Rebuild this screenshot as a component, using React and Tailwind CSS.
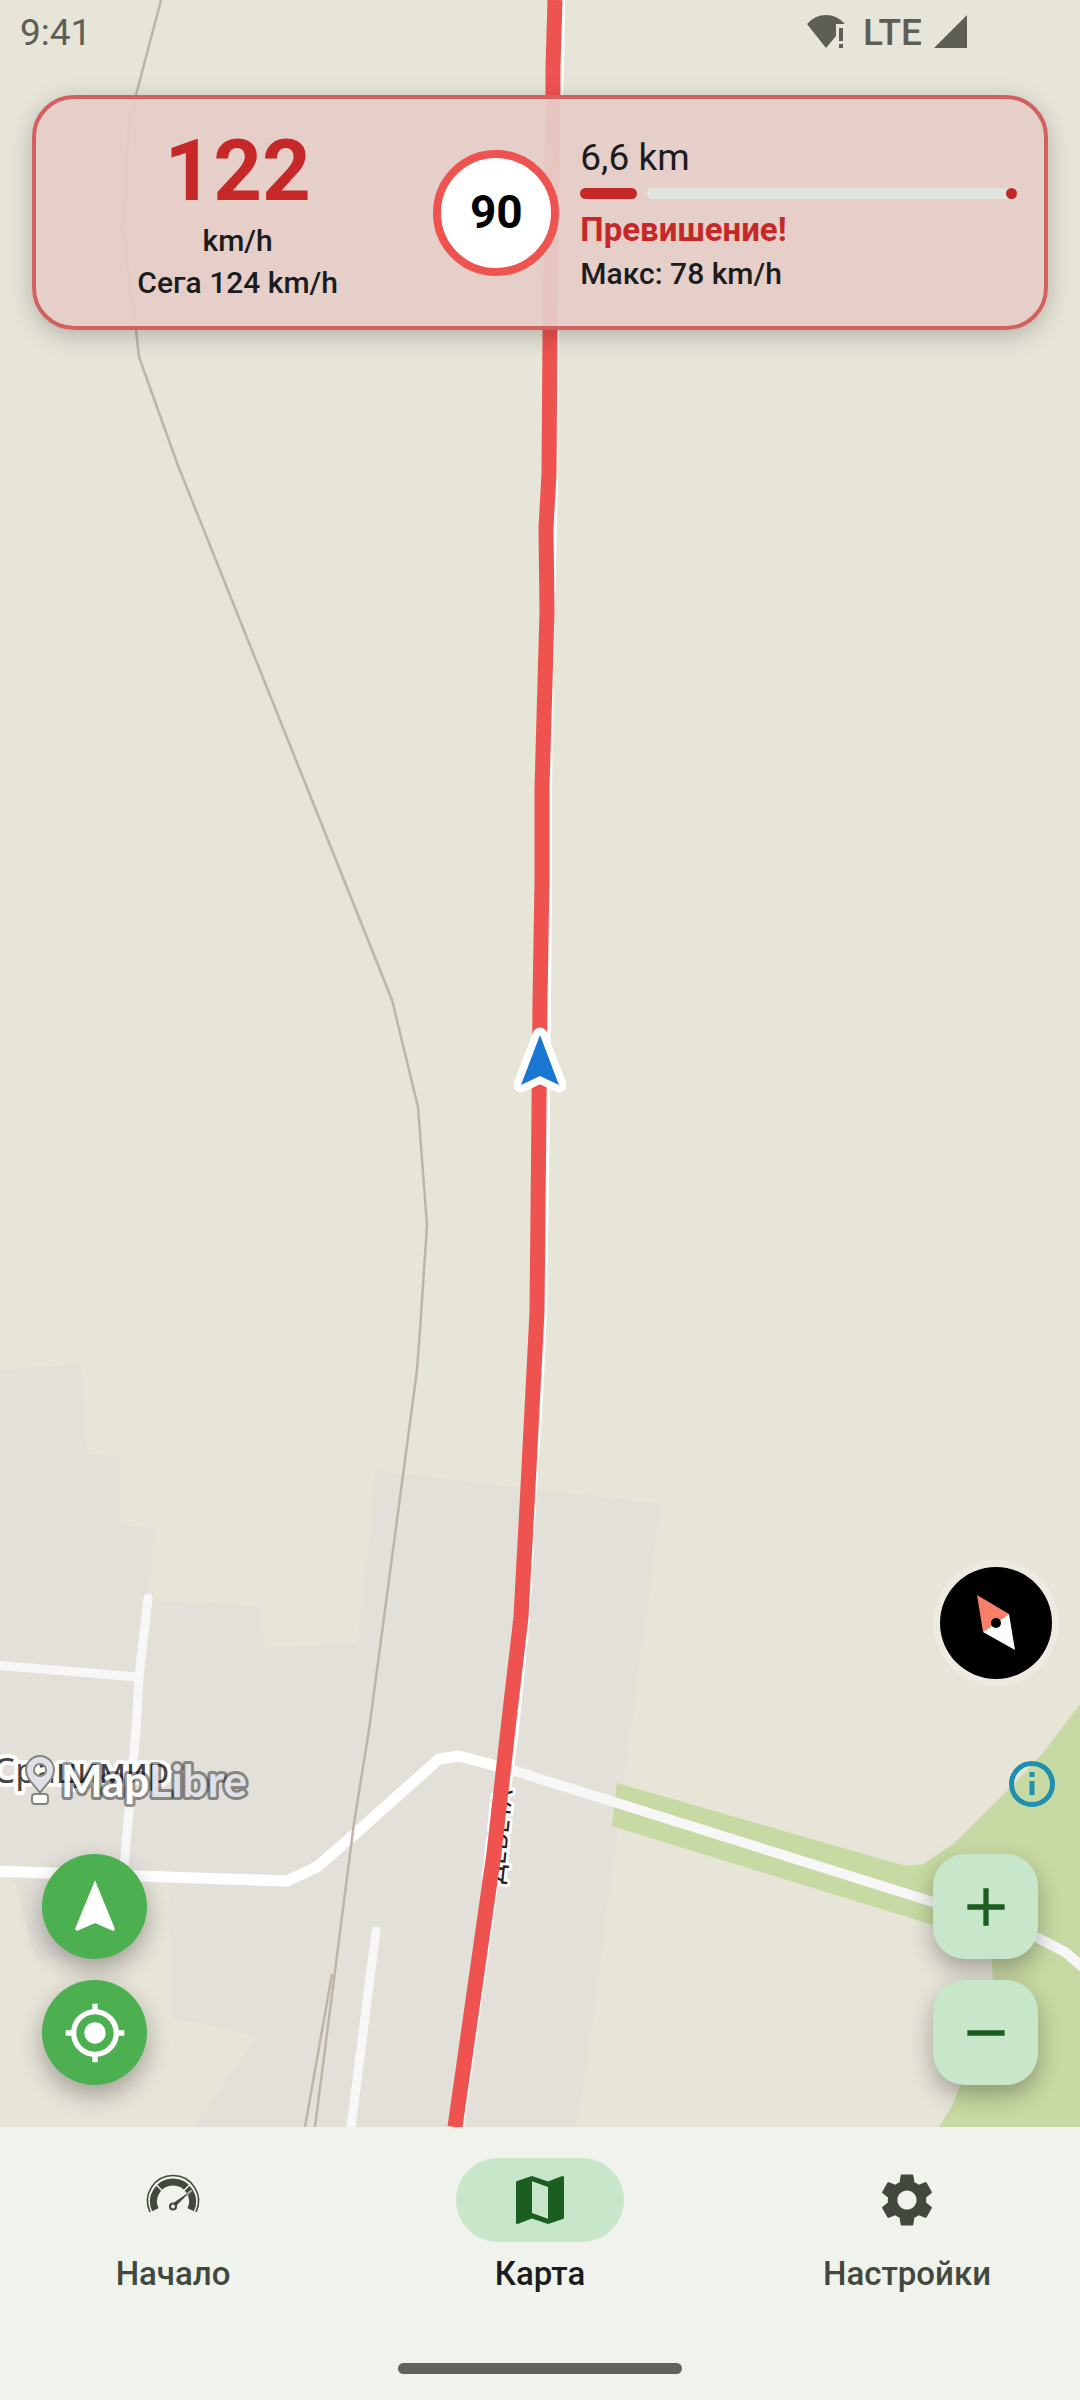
import { useState } from 'react'
import { MdAdd, MdMap, MdMyLocation, MdNavigation, MdRemove, MdSettings } from 'react-icons/md'

const ROUTE =
  'M555 0 L553 68 L553 95 L550 330 L549 474 L546 528 L547 612 L542 788 L542 880 L540 1002 L539 1110 L537 1312 L528 1487 L521 1617 L509 1720 L494 1853 L455 2127'

function MapCanvas() {
  return (
    <svg
      viewBox="0 0 1080 2127"
      preserveAspectRatio="xMidYMax slice"
      className="absolute inset-0 h-full w-full"
      aria-hidden="true"
    >
      <rect width="1080" height="2127" fill="#e7e4d8" />

      {/* built-up areas */}
      <path
        fill="#e2e0d8"
        d="M0 1370 L80 1364 L88 1454 L121 1457 V1525 L155 1529 L148 1600 L260 1606 L264 1648 L358 1643 L376 1471 L661 1504 L632 1720 L583 2093 L575 2127 H194 L256 2036 L170 2017 L169 1882 L0 1872 Z"
      />
      <path fill="#e7e4d8" d="M0 1876 L169 1882 L170 2017 L256 2036 L194 2127 H0 Z" />
      <path fill="#e0ded7" d="M14 1878 L36 1960 L90 1955 V1880 Z" />

      {/* forest */}
      <path
        fill="#c8daa3"
        d="M617 1783 L906 1866 L924 1864 L953 1844 L1010 1788 L1043 1753 L1068 1720 L1080 1704 V2127 H939 L952 2106 L960 2085 L985 2050 L993 1980 L991 1942 L933 1925 L612 1826 Z"
      />

      {/* minor roads */}
      <g fill="none" stroke="#f7f7f7" strokeWidth="9" strokeLinecap="round" strokeLinejoin="round">
        <path d="M148 1598 L139 1677 L136 1730 L124 1868" />
        <path d="M-6 1665 L138 1677" />
        <path d="M376 1931 L350 2135" />
        <path strokeWidth="10" d="M510 1769 L540 1779 L614 1802 L933 1902 L1038 1938 L1065 1952 L1090 1973" />
      </g>
      <path
        fill="none"
        stroke="#fff"
        strokeWidth="11"
        strokeLinejoin="round"
        d="M-6 1871 L287 1881 L317 1867 L356 1833 L439 1759 L459 1756 L504 1768"
      />

      {/* railway */}
      <g fill="none" stroke="#bdb5aa" strokeWidth="2.5">
        <path d="M161 0 L136 95 L129 125 L123 230 L136 330 L139 357 L177 463 L392 1000 L418 1107 L427 1225 L420 1330 L417 1370 L369 1730 L354 1823 L315 2127" />
        <path d="M332 1974 L305 2127" />
      </g>

      <path
        fill="none"
        stroke="#fff"
        strokeWidth="12"
        d="M559 0 L558 68 L557 95 L553 330 L552 474 L549 612 L546 788 L546 880 L545 1002 L544 1110 L541 1312 L537 1400 L531 1487 L524 1617 L513 1730 L493 1880 L458 2127"
      />
      <text
        transform="translate(503 1884) rotate(-84)"
        className="font-['Noto_Sans',sans-serif] text-[26px]"
        fill="#222"
        stroke="#fff"
        strokeWidth="6"
        strokeLinejoin="round"
        paintOrder="stroke"
      >
        ДЕВЕТА
      </text>
      <path d={ROUTE} fill="none" stroke="#ef5350" strokeWidth="15" strokeLinejoin="round" />

      <text
        x="169"
        y="1783"
        textAnchor="end"
        className="font-['Noto_Sans',sans-serif] text-[35px]"
        fill="#444"
        stroke="#fff"
        strokeWidth="8"
        strokeLinejoin="round"
        paintOrder="stroke"
      >
        Срацимир
      </text>

      {/* own position */}
      <path
        d="M540 1035 L559 1085 L540 1076 L521 1085 Z"
        fill="#1976d2"
        stroke="#fff"
        strokeWidth="15"
        strokeLinejoin="round"
        paintOrder="stroke"
      />
    </svg>
  )
}

function StatusBar() {
  return (
    <div className="relative flex h-16 items-center justify-between pr-[113px] pl-5 text-[37px] leading-none text-[#5e5e56]">
      <span>9:41</span>
      <div className="flex items-center gap-3">
        <svg viewBox="0 0 40 34" className="mr-1 h-[34px] w-10" fill="currentColor" aria-hidden="true">
          <path d="M0 9 Q8 0 19 0 T38 9 H29 V21 L19 33 Z" />
          <path d="M32 13 H36 V26 H32 Z M32 29 H36 V33 H32 Z" />
        </svg>
        <span className="font-medium">LTE</span>
        <svg viewBox="0 0 33 34" className="h-[34px] w-[33px]" fill="currentColor" aria-hidden="true">
          <path d="M33 0 V33 H0 Z" />
        </svg>
      </div>
    </div>
  )
}

function SpeedCard() {
  return (
    <section className="relative mx-8 mt-[31px] grid h-[235px] grid-cols-[1fr_126px_1.25fr] items-center gap-[21px] rounded-[42px] border-4 border-[#d36060] bg-[#e5ccc8]/94 px-[27px] text-[#1a1c1e] shadow-[0_6px_24px_rgba(0,0,0,0.22)]">
      <div className="text-center text-[30px] leading-[42px] font-medium">
        <p className="text-[85px] leading-[98px] font-bold text-[#c62828]">122</p>
        <p>km/h</p>
        <p>Сега 124 km/h</p>
      </div>
      <div className="flex size-[126px] items-center justify-center rounded-full border-8 border-[#ef5350] bg-white text-[46px] font-bold text-black">
        90
      </div>
      <div className="flex flex-col">
        <p className="text-[37px] leading-[50px]">6,6 km</p>
        <div
          role="progressbar"
          aria-label="Разстояние"
          aria-valuenow={13}
          aria-valuemin={0}
          aria-valuemax={100}
          className="mt-[5px] mb-[5px] flex h-[11px] gap-[10px]"
        >
          <div className="w-[13%] rounded-full bg-[#c62828]" />
          <div className="flex flex-1 justify-end rounded-full bg-[#dfe4dc]">
            <div className="size-[11px] rounded-full bg-[#c62828]" />
          </div>
        </div>
        <p className="text-[33px] leading-[52px] font-bold text-[#c62828]">Превишение!</p>
        <p className="text-[30px] leading-9 font-medium">Макс: 78 km/h</p>
      </div>
    </section>
  )
}

function MapLibreLogo() {
  return (
    <svg viewBox="0 0 230 54" className="h-[54px] w-[230px] overflow-visible" role="img" aria-label="MapLibre">
      <g stroke="#858580" strokeWidth="2">
        <path
          fill="#e0e1e8"
          fillRule="evenodd"
          d="M16 38 C12 31 2 25 2 15 A14 14 0 0 1 30 15 C30 25 20 31 16 38 Z M16 9 A6 6 0 1 0 16 21 A6 6 0 1 0 16 9 Z"
        />
        <rect x="8" y="39" width="16" height="10" rx="3" fill="#fff" />
      </g>
      <text
        x="37"
        y="42"
        className="font-[Lato,sans-serif] text-[44px] font-bold"
        stroke="#000"
        strokeOpacity="0.42"
        strokeWidth="6"
        strokeLinejoin="round"
        paintOrder="stroke"
      >
        <tspan fill="#fff">Map</tspan>
        <tspan fill="#e0e1e8">Libre</tspan>
      </text>
    </svg>
  )
}

function Compass() {
  return (
    <button type="button" aria-label="Север" className="size-[126px]">
      <svg viewBox="0 0 126 126" className="h-full w-full">
        <circle cx="63" cy="63" r="63" fill="#edeae1" />
        <circle cx="63" cy="63" r="56" fill="#000" />
        <path d="M44 35 L76 54 L50 72 Z" fill="#f88068" />
        <path d="M76 54 L50 72 L82 90 Z" fill="#fcfcfc" />
        <circle cx="63" cy="63" r="5" fill="#000" />
      </svg>
    </button>
  )
}

function RoundButton({ label, icon: Icon }) {
  return (
    <button
      type="button"
      aria-label={label}
      className="flex size-[105px] items-center justify-center rounded-full bg-[#4caf50] text-white shadow-[0_10px_24px_rgba(0,0,0,0.3)]"
    >
      <Icon className="size-16" />
    </button>
  )
}

function ZoomButton({ label, icon: Icon }) {
  return (
    <button
      type="button"
      aria-label={label}
      className="flex size-[105px] items-center justify-center rounded-[32px] bg-[#c8e6c9] text-[#1b5e20] shadow-[0_10px_24px_rgba(0,0,0,0.3)]"
    >
      <Icon className="size-16" />
    </button>
  )
}

function SpeedIcon({ className }) {
  return (
    <svg viewBox="0 0 64 64" className={className} fill="none" stroke="currentColor">
      <path strokeWidth="1.6" d="M9 44 A25.5 25.5 0 1 1 55 44" />
      <path strokeWidth="7" d="M14.3 41.7 A19.5 19.5 0 1 1 49.7 41.7" />
      <path stroke="#eff3eb" strokeWidth="1.5" d="M22 23.5 L14.5 16 M42 23.5 L49.5 16" />
      <path stroke="#eff3eb" strokeWidth="1.2" fill="currentColor" paintOrder="stroke" d="M33 34.5 L50.5 22.5 L35.5 37.5 Z" />
      <circle cx="32" cy="38.5" r="3" strokeWidth="2.2" />
    </svg>
  )
}

const TABS = [
  { id: 'home', label: 'Начало', icon: SpeedIcon },
  { id: 'map', label: 'Карта', icon: MdMap },
  { id: 'settings', label: 'Настройки', icon: MdSettings },
]

export default function App() {
  const [tab, setTab] = useState('map')

  return (
    <div className="flex min-h-screen flex-col bg-[#eff3eb] font-[Roboto,sans-serif]">
      <main className="relative flex flex-1 flex-col overflow-hidden">
        <MapCanvas />
        <StatusBar />
        <SpeedCard />

        <div className="relative mt-auto flex items-end justify-between pr-[21px] pb-[42px] pl-6">
          <div className="flex flex-col">
            <MapLibreLogo />
            <div className="mt-[45px] ml-[18px] flex flex-col gap-[21px]">
              <RoundButton label="Посока" icon={MdNavigation} />
              <RoundButton label="Моето местоположение" icon={MdMyLocation} />
            </div>
          </div>
          <div className="flex flex-col items-end">
            <Compass />
            <button type="button" aria-label="Информация" className="mt-[75px] mr-1 size-[46px]">
              <svg viewBox="0 0 46 46" className="h-full w-full" fill="none" stroke="#1e8fb0" strokeWidth="5">
                <circle cx="23" cy="23" r="20.5" />
                <path d="M23 11 V16 M23 20 V34" />
              </svg>
            </button>
            <div className="mt-[47px] mr-[21px] flex flex-col gap-[21px]">
              <ZoomButton label="Приближи" icon={MdAdd} />
              <ZoomButton label="Отдалечи" icon={MdRemove} />
            </div>
          </div>
        </div>
      </main>

      <nav className="grid grid-cols-3 gap-[21px] pt-[31px]">
        {TABS.map(({ id, label, icon: Icon }) => (
          <button
            key={id}
            type="button"
            onClick={() => setTab(id)}
            aria-current={tab === id ? 'page' : undefined}
            className="flex flex-col items-center gap-2"
          >
            <span
              className={`flex h-[84px] w-[168px] items-center justify-center rounded-full ${
                tab === id ? 'bg-[#c8e6c9] text-[#1b5e20]' : 'text-[#43483f]'
              }`}
            >
              <Icon className="size-16" />
            </span>
            <span
              className={`text-[33px] leading-[48px] font-medium ${
                tab === id ? 'text-[#1a1c1e]' : 'text-[#43483f]'
              }`}
            >
              {label}
            </span>
          </button>
        ))}
      </nav>
      <div className="flex justify-center pt-[65px] pb-[26px]">
        <div className="h-[11px] w-[284px] rounded-full bg-[#61625e]" />
      </div>
    </div>
  )
}
